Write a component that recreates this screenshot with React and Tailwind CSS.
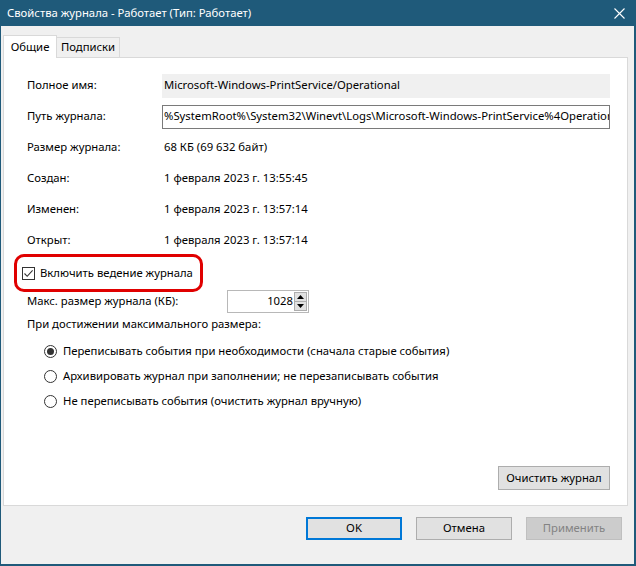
const fields = [
  { label: "Полное имя:", value: "Microsoft-Windows-PrintService/Operational", kind: "readonly" },
  { label: "Путь журнала:", value: "%SystemRoot%\\System32\\Winevt\\Logs\\Microsoft-Windows-PrintService%4Operational.evtx", kind: "input" },
  { label: "Размер журнала:", value: "68 КБ (69 632 байт)" },
  { label: "Создан:", value: "1 февраля 2023 г. 13:55:45" },
  { label: "Изменен:", value: "1 февраля 2023 г. 13:57:14" },
  { label: "Открыт:", value: "1 февраля 2023 г. 13:57:14" }
];

const radios = [
  { label: "Переписывать события при необходимости (сначала старые события)", checked: true },
  { label: "Архивировать журнал при заполнении; не перезаписывать события", checked: false },
  { label: "Не переписывать события (очистить журнал вручную)", checked: false }
];

function Radio({ checked }) {
  return (
    <span className="flex h-[13px] w-[13px] items-center justify-center rounded-full border border-[#333333] bg-white">
      {checked ? <span className="h-[7px] w-[7px] rounded-full bg-[#333333]" /> : null}
    </span>
  );
}

export default function App() {
  return (
    <div
      className="flex h-[566px] w-[636px] flex-col bg-[#1f5a7a] pb-[2px] pl-[1px] pr-[2px] text-[11.3px] text-black"
      style={{ fontFamily: '"Noto Sans", "Open Sans", sans-serif' }}
    >
      <div className="flex h-[26px] shrink-0 items-center justify-between pl-[6px] pr-[9px] text-white">
        <span>Свойства журнала - Работает (Тип: Работает)</span>
        <svg width="11" height="11" viewBox="0 0 11 11">
          <path d="M0.5 0.5 L10.5 10.5 M10.5 0.5 L0.5 10.5" stroke="white" strokeWidth="1.1" />
        </svg>
      </div>

      <div className="flex flex-1 flex-col bg-[#f0f0f0] pl-[2px] pr-[6px]">
        <div className="flex h-[31px] items-end pt-[9px]">
          <div className="relative z-10 -mb-px flex h-[23px] w-[54px] items-center justify-center border border-b-0 border-[#d9d9d9] bg-white">
            Общие
          </div>
          <div className="flex h-[20px] w-[63px] items-center justify-center border border-l-0 border-b-0 border-[#d9d9d9] bg-[#f0f0f0]">
            Подписки
          </div>
        </div>

        <div className="flex h-[449px] flex-col border border-[#d9d9d9] bg-white pl-[23px] pr-[17px]">
          <div className="mt-[12px] flex flex-col">
            {fields.map((f) => (
              <div key={f.label} className="flex h-[31px] items-center">
                <span className="w-[135px] shrink-0">{f.label}</span>
                {f.kind === "readonly" ? (
                  <div className="flex h-[24px] flex-1 items-center overflow-hidden whitespace-nowrap bg-[#f0f0f0] pl-[2px]">
                    {f.value}
                  </div>
                ) : f.kind === "input" ? (
                  <div className="flex h-[24px] min-w-0 flex-1 items-center overflow-hidden whitespace-nowrap border border-[#7a7a7a] pl-[1px]">
                    {f.value}
                  </div>
                ) : (
                  <span className="pl-[2px]">{f.value}</span>
                )}
              </div>
            ))}
          </div>

          <div className="-ml-[13px] -mt-[2px] flex h-[38px] w-[189px] items-center whitespace-nowrap rounded-[10px] border-[3px] border-[#e00000] pl-[5px]">
            <span className="flex h-[13px] w-[13px] shrink-0 items-center justify-center border border-[#333333]">
              <svg width="11" height="11" viewBox="0 0 11 11">
                <path d="M1.5 5.5 L4.2 8.3 L9.6 2.4" stroke="#333333" strokeWidth="1.1" fill="none" />
              </svg>
            </span>
            <span className="ml-[5px]">Включить ведение журнала</span>
          </div>

          <div className="-mt-[2px] flex h-[23px] items-center">
            <span className="w-[200px]">Макс. размер журнала (КБ):</span>
            <div className="flex h-[23px] w-[82px] items-center justify-end border border-[#b8b8b8] bg-white pr-[1px]">
              <span className="mr-[1px]">1028</span>
              <div className="flex flex-col">
                <span className="flex h-[10px] w-[13px] items-center justify-center border border-[#adadad] bg-[#e1e1e1]">
                  <svg width="7" height="4" viewBox="0 0 7 4"><path d="M0 4 L3.5 0 L7 4 Z" fill="#000" /></svg>
                </span>
                <span className="-mt-px flex h-[10px] w-[13px] items-center justify-center border border-[#adadad] bg-[#e1e1e1]">
                  <svg width="7" height="4" viewBox="0 0 7 4"><path d="M0 0 L3.5 4 L7 0 Z" fill="#000" /></svg>
                </span>
              </div>
            </div>
          </div>

          <div className="flex h-[22px] items-center">При достижении максимального размера:</div>

          <div className="mt-[4px] flex flex-col pl-[17px]">
            {radios.map((r) => (
              <div key={r.label} className="flex h-[25px] items-center">
                <Radio checked={r.checked} />
                <span className="ml-[6px]">{r.label}</span>
              </div>
            ))}
          </div>

          <div className="mt-auto mb-[15px] flex justify-end">
            <button className="h-[24px] w-[112px] border border-[#adadad] bg-[#e1e1e1]">Очистить журнал</button>
          </div>
        </div>

        <div className="mt-[11px] flex justify-end gap-[14px] pr-[6px]">
          <button className="h-[23px] w-[96px] border-2 border-[#0078d7] bg-[#e1e1e1]">OK</button>
          <button className="h-[23px] w-[96px] border border-[#adadad] bg-[#e1e1e1]">Отмена</button>
          <button className="h-[23px] w-[96px] border border-[#bfbfbf] bg-[#cccccc] text-[#838383]">Применить</button>
        </div>
      </div>
    </div>
  );
}
